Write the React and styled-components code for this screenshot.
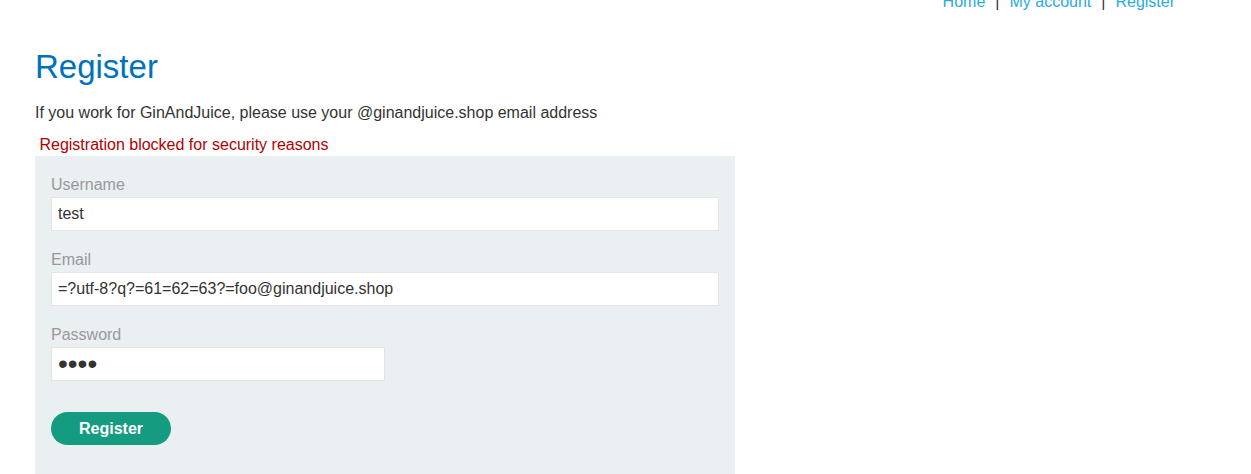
import React from 'react';
import styled, { createGlobalStyle } from 'styled-components';

const GlobalStyle = createGlobalStyle`
  * { box-sizing: border-box; }
  html { scrollbar-width: none; }
  body {
    margin: 0;
    background: #fff;
    color: #333332;
    font: 16px/24px "Liberation Sans", Arial, sans-serif;
  }
`;

const Page = styled.div`
  padding: 0 35px;
  overflow: hidden;
`;

const TopLinks = styled.nav`
  display: flex;
  justify-content: flex-end;
  gap: 10px;
  margin-top: -10px;
  padding-right: 41px;
`;

const TopLink = styled.a`
  color: #29abe2;
  text-decoration: none;
`;

const Title = styled.h1`
  margin: 33px 0 14px;
  color: #0071bc;
  font-size: 33px;
  line-height: 40px;
  font-weight: 400;
`;

const Hint = styled.p`
  margin: 0 0 8px;
`;

const Warning = styled.p`
  margin: 0;
  line-height: 23px;
  color: #b30000;
`;

const Form = styled.form`
  display: flex;
  flex-direction: column;
  gap: 17px;
  max-width: 700px;
  padding: 17px 16px 32px;
  background: #eaeff2;
`;

const Field = styled.div`
  display: flex;
  flex-direction: column;
  align-items: flex-start;
`;

const Label = styled.label`
  color: #999;
`;

const Input = styled.input`
  width: 100%;
  height: 34px;
  padding: 0 6px;
  border: 1px solid #e4e4e4;
  border-radius: 0;
  background: #fff;
  color: #333332;
  font: inherit;
  outline: none;
`;

const PasswordInput = styled(Input)`
  width: 50%;
  font-size: 28px;
`;

const Submit = styled.button`
  align-self: flex-start;
  height: 33px;
  margin-top: 14px;
  padding: 0 28px;
  border: 0;
  border-radius: 17px;
  background: #159b80;
  color: #fff;
  font: inherit;
  font-weight: 700;
  cursor: pointer;
`;

export default function App() {
  return (
    <>
      <GlobalStyle />
      <Page>
        <TopLinks>
          <TopLink href="#home">Home</TopLink>
          <span>|</span>
          <TopLink href="#account">My account</TopLink>
          <span>|</span>
          <TopLink href="#register">Register</TopLink>
        </TopLinks>
        <main>
          <Title>Register</Title>
          <Hint>If you work for GinAndJuice, please use your @ginandjuice.shop email address</Hint>
          <Warning role="alert">&nbsp;Registration blocked for security reasons</Warning>
          <Form onSubmit={(event) => event.preventDefault()}>
            <Field>
              <Label htmlFor="username">Username</Label>
              <Input id="username" type="text" defaultValue="test" />
            </Field>
            <Field>
              <Label htmlFor="email">Email</Label>
              <Input
                id="email"
                type="text"
                defaultValue="=?utf-8?q?=61=62=63?=foo@ginandjuice.shop"
              />
            </Field>
            <Field>
              <Label htmlFor="password">Password</Label>
              <PasswordInput id="password" type="password" defaultValue="test" />
            </Field>
            <Submit type="submit">Register</Submit>
          </Form>
        </main>
      </Page>
    </>
  );
}
